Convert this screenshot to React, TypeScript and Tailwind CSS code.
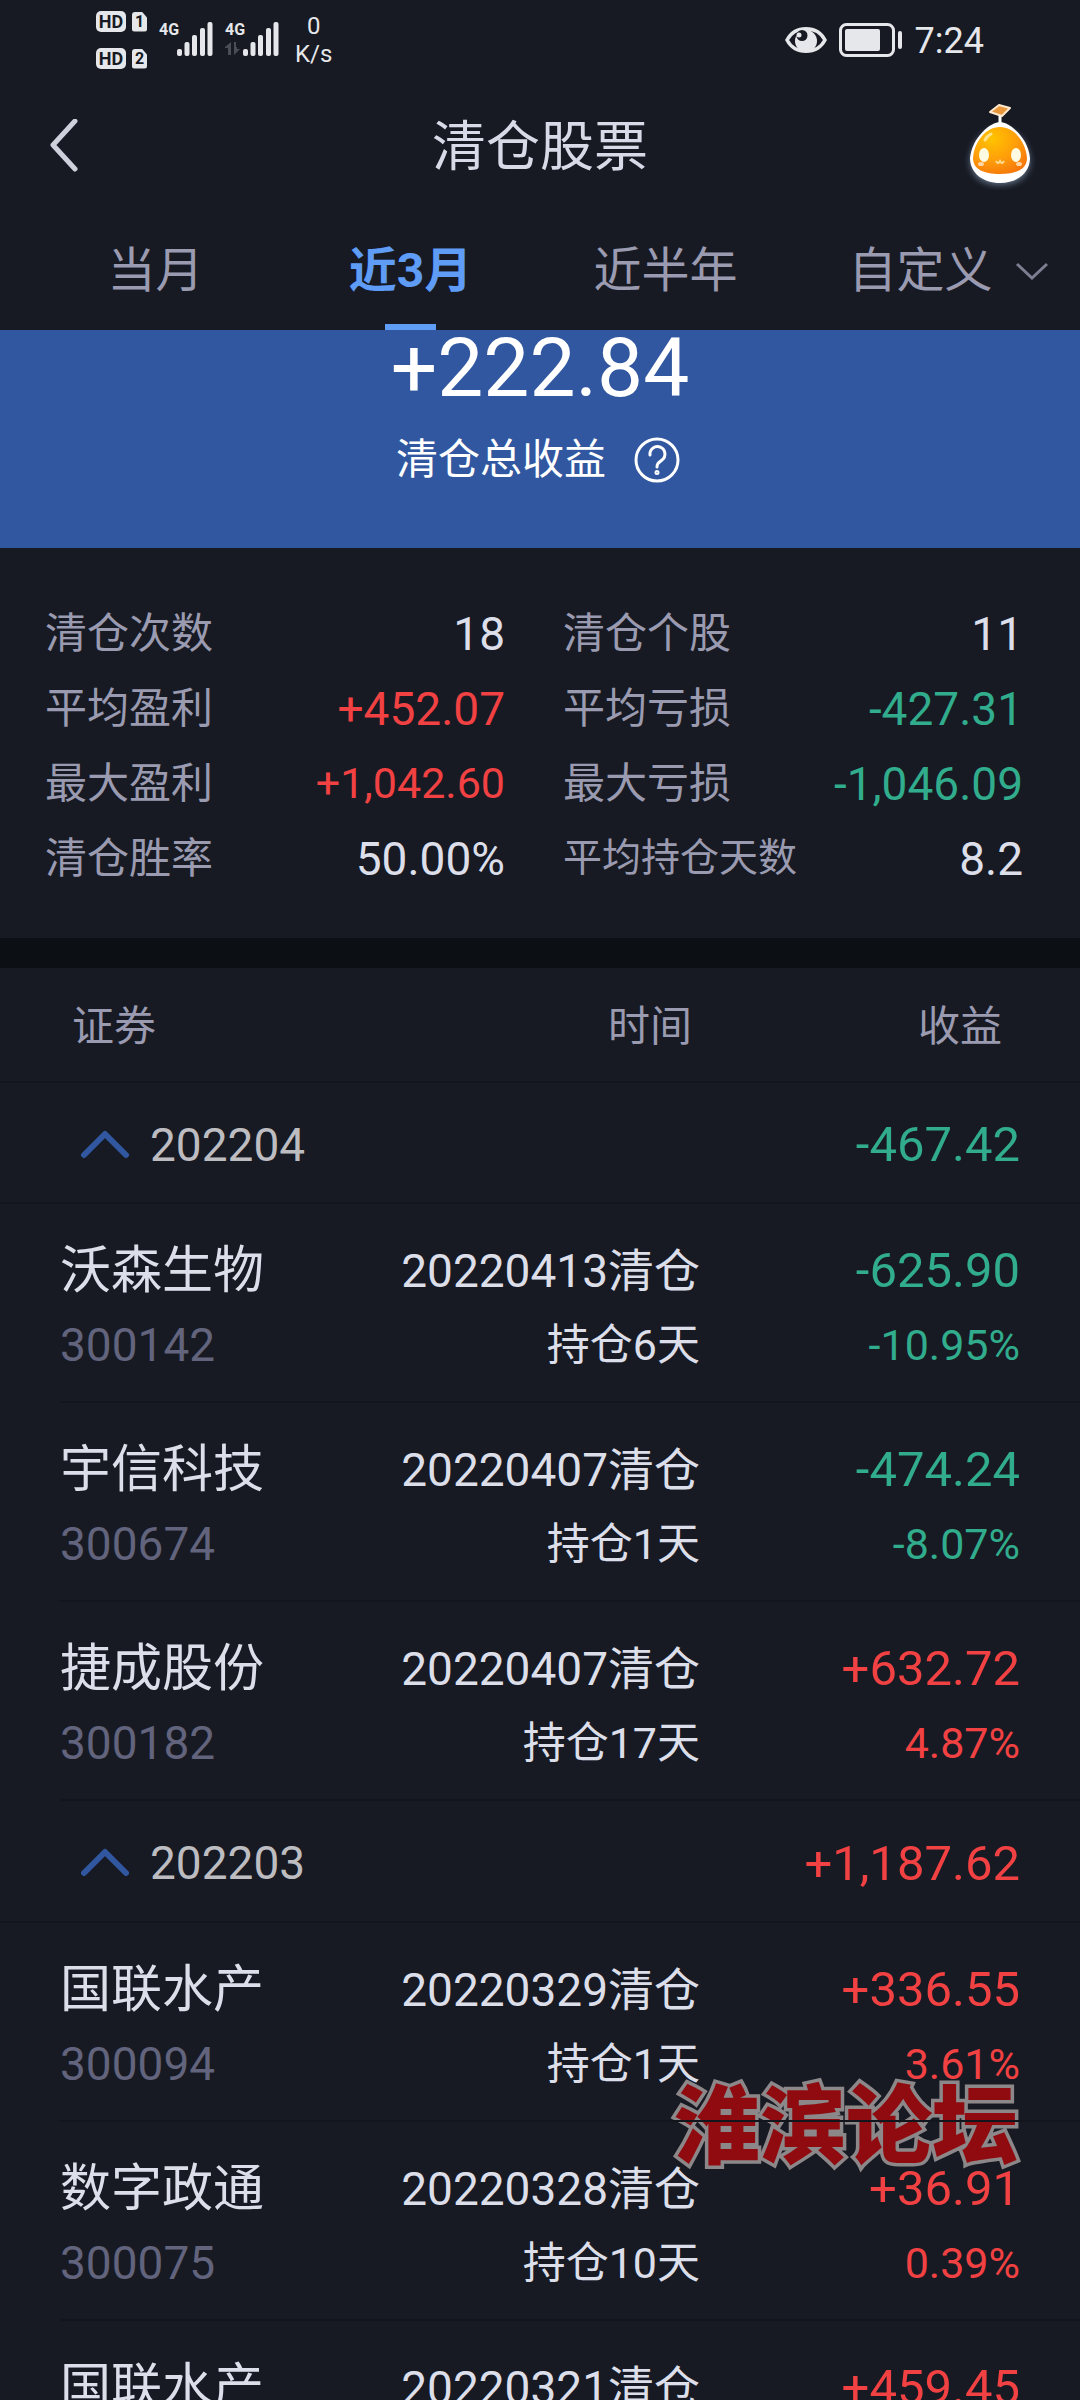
import { useState } from "react";

type Holding = {
  name: string;
  code: string;
  date: string;
  days: string;
  profit: string;
  rate: string;
};

type Month = {
  month: string;
  total: string;
  holdings: Holding[];
};

const tabs = ["当月", "近3月", "近半年", "自定义"];

const stats = [
  { label: "清仓次数", value: "18" },
  { label: "清仓个股", value: "11" },
  { label: "平均盈利", value: "+452.07" },
  { label: "平均亏损", value: "-427.31" },
  { label: "最大盈利", value: "+1,042.60", smallValue: true },
  { label: "最大亏损", value: "-1,046.09" },
  { label: "清仓胜率", value: "50.00%" },
  { label: "平均持仓天数", value: "8.2", smallLabel: true },
];

const months: Month[] = [
  {
    month: "202204",
    total: "-467.42",
    holdings: [
      { name: "沃森生物", code: "300142", date: "20220413清仓", days: "持仓6天", profit: "-625.90", rate: "-10.95%" },
      { name: "宇信科技", code: "300674", date: "20220407清仓", days: "持仓1天", profit: "-474.24", rate: "-8.07%" },
      { name: "捷成股份", code: "300182", date: "20220407清仓", days: "持仓17天", profit: "+632.72", rate: "4.87%" },
    ],
  },
  {
    month: "202203",
    total: "+1,187.62",
    holdings: [
      { name: "国联水产", code: "300094", date: "20220329清仓", days: "持仓1天", profit: "+336.55", rate: "3.61%" },
      { name: "数字政通", code: "300075", date: "20220328清仓", days: "持仓10天", profit: "+36.91", rate: "0.39%" },
      { name: "国联水产", code: "300094", date: "20220321清仓", days: "持仓5天", profit: "+459.45", rate: "4.92%" },
    ],
  },
];

const signColor = (value: string) => {
  if (value.startsWith("-")) return "text-[#31ac8c]";
  if (value.startsWith("+")) return "text-[#f24142]";
  return "text-[#dcdfe9]";
};

function SimBadge({ n }: { n: string }) {
  return (
    <div className="flex gap-1.5 items-center font-bold text-[#171a23]">
      <span className="flex items-center justify-center w-[30px] h-[21px] rounded-[5px] bg-[#e6e7ea] text-[18px] leading-none">HD</span>
      <span className="flex items-center justify-center w-[15px] h-[20px] rounded-[3px] bg-[#e6e7ea] text-[16px] leading-none [clip-path:polygon(0_0,65%_0,100%_30%,100%_100%,0_100%)]">{n}</span>
    </div>
  );
}

function Signal({ data }: { data?: boolean }) {
  return (
    <div className="flex h-[34px]">
      <div className="w-[18px]">
        <span className="block text-[16px] leading-[16px] font-bold">4G</span>
        {data && (
          <svg viewBox="0 0 16 13" className="w-[16px] h-[13px] mt-1" fill="#4b4d56">
            <path d="M0 5 6 0v13H3V6H0zM9 0v13l6-6h-3V5h-1V0z" />
          </svg>
        )}
      </div>
      <svg viewBox="0 0 36 34" className="w-[36px] h-[34px]" fill="#e6e7ea">
        <rect x="0" y="27" width="5" height="7" rx="2" />
        <rect x="7.5" y="20" width="5" height="14" rx="2" />
        <rect x="15" y="13" width="5" height="21" rx="2" />
        <rect x="23" y="6" width="5" height="28" rx="2" />
        <rect x="30.5" y="0" width="5" height="34" rx="2" />
      </svg>
    </div>
  );
}

function StatusBar() {
  return (
    <div className="flex h-[80px] items-start justify-between px-[96px] text-[#e6e7ea]">
      <div className="flex">
        <div className="flex flex-col gap-4 pt-[11px]">
          <SimBadge n="1" />
          <SimBadge n="2" />
        </div>
        <div className="flex gap-3 pl-3 pt-[22px]">
          <Signal />
          <Signal data />
        </div>
        <div className="pl-4 pt-3 text-center text-[24px] leading-[28px]">
          <p>0</p>
          <p>K/s</p>
        </div>
      </div>
      <div className="flex items-center h-[80px] gap-3">
        <svg viewBox="0 0 42 28" className="w-[42px] h-[28px]">
          <path d="M2 14C10-1 32-1 40 14 32 29 10 29 2 14Z" fill="none" stroke="#e6e7ea" strokeWidth="3.5" />
          <circle cx="21" cy="15" r="11" fill="#e6e7ea" />
          <circle cx="17" cy="9.5" r="5.5" fill="#171a23" />
          <circle cx="14" cy="9" r="2.5" fill="#e6e7ea" />
        </svg>
        <svg viewBox="0 0 64 34" className="w-[64px] h-[34px]" fill="#e6e7ea">
          <rect x="1.5" y="1.5" width="53" height="31" rx="6" fill="none" stroke="#e6e7ea" strokeWidth="3" />
          <rect x="6" y="6" width="35" height="22" rx="2" />
          <rect x="59" y="8" width="4" height="18" rx="2" />
        </svg>
        <span className="pt-0.5 text-[36px] leading-none">7:24</span>
      </div>
    </div>
  );
}

function Mascot() {
  return (
    <svg viewBox="0 0 76 88" className="w-[76px] h-[88px]">
      <defs>
        <radialGradient id="body" cx="0.35" cy="0.25" r="0.85">
          <stop offset="0" stopColor="#ffc400" />
          <stop offset="0.55" stopColor="#ff9d0a" />
          <stop offset="1" stopColor="#f4740c" />
        </radialGradient>
        <filter id="glow" x="-30%" y="-30%" width="160%" height="160%">
          <feGaussianBlur stdDeviation="3" />
        </filter>
      </defs>
      <path d="M38 26c-17 0-29 17-30 32 0 17 13 25 30 25s30-8 30-25c-1-15-13-32-30-32Z" fill="#7d93ad" opacity="0.7" filter="url(#glow)" />
      <path d="M38 12v12" stroke="#fff" strokeWidth="3" />
      <path d="M38 20c-9 0-28 15-30 36 0 15 13 25 30 25s30-10 30-25c-2-21-21-36-30-36Z" fill="#fff" />
      <path d="M38 25c-15 0-26 16-27 31 0 11 10 16 27 16s27-5 27-16c-1-15-12-31-27-31Z" fill="url(#body)" />
      <path d="m28 10 9-7 11 3-8 8Z" fill="#e8973a" stroke="#ffe9cf" strokeWidth="2" strokeLinejoin="round" />
      <ellipse cx="22" cy="53" rx="5" ry="7" fill="#fffbe2" />
      <ellipse cx="54" cy="53" rx="5" ry="7" fill="#fffbe2" />
      <ellipse cx="19" cy="62" rx="3" ry="2" fill="#ffd7a6" />
      <ellipse cx="57" cy="62" rx="3" ry="2" fill="#ffd7a6" />
      <path d="M34 59q2 4 4 0 2 4 4 0" fill="none" stroke="#ffd98c" strokeWidth="2" />
      <path d="M23 38q2-4 6-6" fill="none" stroke="#ffe48a" strokeWidth="3" strokeLinecap="round" />
    </svg>
  );
}

function Header() {
  return (
    <header className="grid grid-cols-[1fr_auto_1fr] items-center h-[132px] px-[42px]">
      <button type="button" aria-label="返回" className="pl-2">
        <svg viewBox="0 0 30 54" className="w-[30px] h-[54px]" fill="none" stroke="#ced1dc" strokeWidth="5" strokeLinecap="round" strokeLinejoin="round">
          <path d="M25 2 3 26l22 24" />
        </svg>
      </button>
      <h1 className="pt-1 text-[54px] leading-none text-[#d8dbe7]">清仓股票</h1>
      <button type="button" aria-label="助手" className="justify-self-end">
        <Mascot />
      </button>
    </header>
  );
}

function Tabs() {
  const [active, setActive] = useState("近3月");

  return (
    <nav className="grid grid-cols-4 h-[118px] pl-7 pr-8 text-[48px] leading-none">
      {tabs.map((tab) => (
        <button
          key={tab}
          type="button"
          onClick={() => setActive(tab)}
          className={`relative flex items-center justify-center ${tab === active ? "font-bold text-[#5f9cf5]" : "text-[#9a9ab0]"}`}
        >
          {tab}
          {tab === active && <span className="absolute bottom-0 w-[51px] h-[6px] bg-[#5f9cf5]" />}
          {tab === "自定义" && (
            <svg viewBox="0 0 32 18" className="absolute right-0 w-[32px] h-[18px]" fill="none" stroke="#7d7e90" strokeWidth="3">
              <path d="m1 2 15 14L31 2" />
            </svg>
          )}
        </button>
      ))}
    </nav>
  );
}

function Total() {
  return (
    <section className="flex flex-col items-center h-[218px] bg-[#30579f] text-white">
      <p className="text-[82px] leading-[76px]">+222.84</p>
      <div className="flex items-center gap-7 mt-7 pr-1 text-[42px] leading-[52px]">
        清仓总收益
        <button type="button" aria-label="说明">
          <svg viewBox="0 0 46 46" className="w-[46px] h-[46px]" fill="none" stroke="#fff" strokeWidth="3" strokeLinecap="round">
            <circle cx="23" cy="23" r="21" />
            <path d="M16 18a7.500 7.500 0 1 1 12 5c-4 3-5 4-5 7" />
            <circle cx="23" cy="35.5" r="1" />
          </svg>
        </button>
      </div>
    </section>
  );
}

function Stats() {
  return (
    <dl className="grid grid-cols-2 gap-x-[58px] pt-12 pb-[42px] pl-[45px] pr-[57px]">
      {stats.map(({ label, value, smallLabel, smallValue }) => (
        <div key={label} className="flex items-center justify-between h-[75px]">
          <dt className={`text-[#9a9ab0] leading-none ${smallLabel ? "text-[39px]" : "text-[42px]"}`}>{label}</dt>
          <dd className={`leading-none ${smallValue ? "text-[43px]" : "text-[46px]"} ${signColor(value)}`}>{value}</dd>
        </div>
      ))}
    </dl>
  );
}

function MonthRows({ month, total, holdings }: Month) {
  const [open, setOpen] = useState(true);

  return (
    <tbody>
      <tr className="h-[121px] border-b-2 border-[#12151c]">
        <td colSpan={2} className="pt-1">
          <button type="button" onClick={() => setOpen(!open)} className="flex items-center gap-5 pl-[80px] text-[46px] leading-none text-[#bdbdc1]">
            <svg viewBox="0 0 50 30" className={`w-[50px] h-[30px] ${open ? "" : "rotate-180"}`} fill="none" stroke="#30579f" strokeWidth="6" strokeLinecap="round" strokeLinejoin="round">
              <path d="M4 25 25 4l21 21" />
            </svg>
            {month}
          </button>
        </td>
        <td className={`pt-1 pr-[60px] text-right text-[49px] leading-none ${signColor(total)}`}>{total}</td>
      </tr>
      {open &&
        holdings.map((h) => (
          <tr key={h.date + h.code}>
            <td className="pl-[60px]">
              <div className="h-[199px] border-b-2 border-[#12151c] pt-[30px] whitespace-nowrap">
                <p className="text-[51px] leading-[74px] text-[#dcdfe9]">{h.name}</p>
                <p className="text-[46px] leading-[74px] text-[#62637c]">{h.code}</p>
              </div>
            </td>
            <td>
              <div className="h-[199px] border-b-2 border-[#12151c] pt-[30px] pr-0.5 text-right text-[#dcdfe9] whitespace-nowrap">
                <p className="text-[46px] leading-[74px]">{h.date}</p>
                <p className="text-[43px] leading-[74px]">{h.days}</p>
              </div>
            </td>
            <td>
              <div className={`h-[199px] border-b-2 border-[#12151c] pt-[30px] pr-[60px] text-right ${signColor(h.profit)}`}>
                <p className="text-[49px] leading-[74px]">{h.profit}</p>
                <p className="text-[43px] leading-[74px]">{h.rate}</p>
              </div>
            </td>
          </tr>
        ))}
    </tbody>
  );
}

export default function App() {
  return (
    <div className="relative flex flex-col h-screen overflow-hidden bg-[#171a23] font-['Roboto','Noto_Sans_CJK_SC',sans-serif]">
      <StatusBar />
      <Header />
      <Tabs />
      <main className="flex-1 min-h-0 overflow-y-auto [scrollbar-width:none]">
        <Total />
        <Stats />
        <div className="h-[30px] bg-[#0c1014]" />
        <table className="relative z-10 w-full table-fixed border-collapse">
          <thead>
            <tr className="h-[114px] border-b-2 border-[#12151c] text-[42px] leading-none text-[#9a9ab0]">
              <th className="w-[30%] pt-1 pl-[72px] text-left font-normal">证券</th>
              <th className="w-[35%] pt-1 pr-[10px] text-right font-normal">时间</th>
              <th className="w-[35%] pt-1 pr-[78px] text-right font-normal">收益</th>
            </tr>
          </thead>
          {months.map((m) => (
            <MonthRows key={m.month} {...m} />
          ))}
        </table>
      </main>
      <p className="absolute right-[62px] bottom-[224px] flex gap-1 text-[86px] leading-[96px] font-black text-[#8f0b10] [-webkit-text-stroke:7px_#8c8789] [paint-order:stroke_fill]">淮滨论坛</p>
    </div>
  );
}
